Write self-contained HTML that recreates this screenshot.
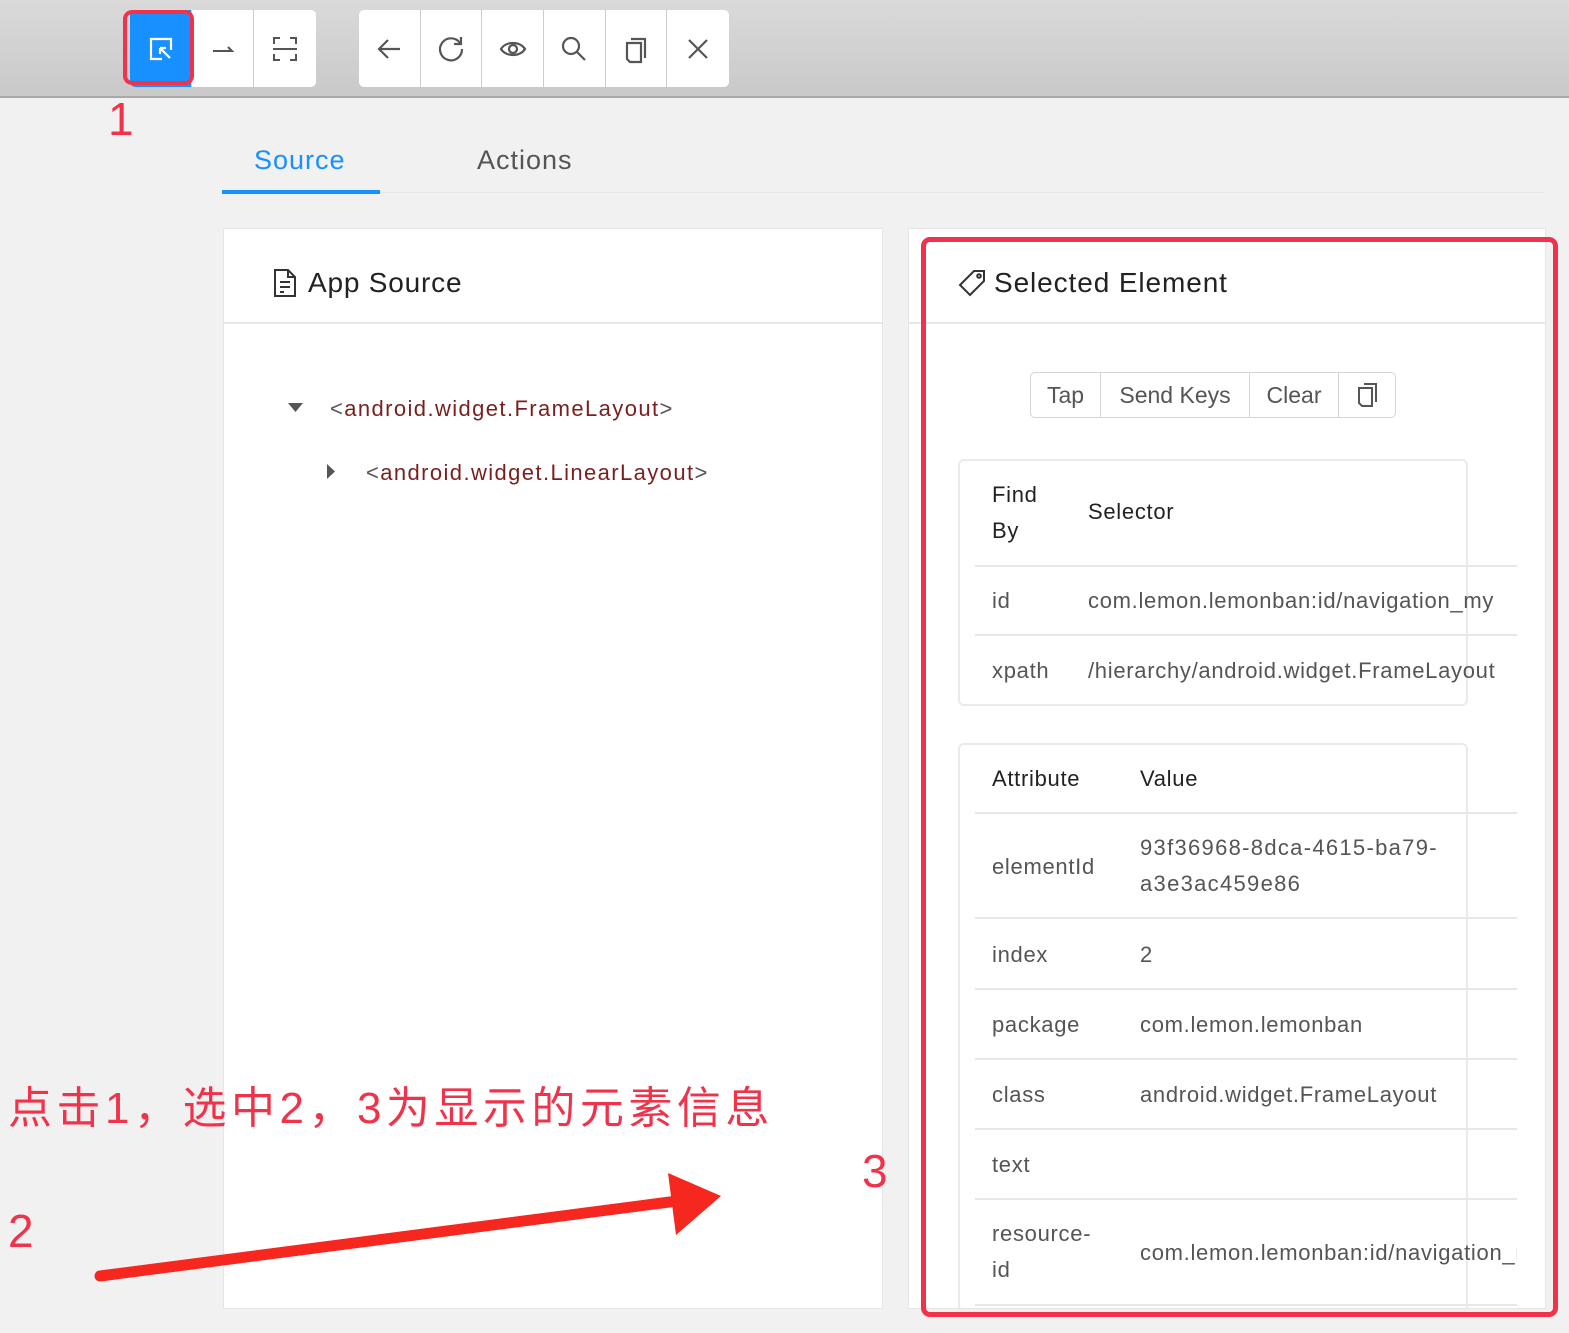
<!DOCTYPE html>
<html><head><meta charset="utf-8"><style>
*{box-sizing:border-box;margin:0;padding:0}
body{width:1569px;height:1333px;overflow:hidden;background:#f1f1f1;font-family:"Liberation Sans","Noto Sans CJK SC",sans-serif;position:relative;color:#333}
.a{position:absolute;white-space:nowrap}
.tb{position:absolute;left:0;top:0;width:1569px;height:98px;background:linear-gradient(#dadada,#c9c9c9);border-bottom:2px solid #a9a9a9}
.grp{position:absolute;top:10px;height:77px;background:#fff;border-radius:5px;display:flex;overflow:hidden}
.grp div{width:62px;height:77px;border-right:1px solid #ccc;display:flex;align-items:center;justify-content:center}
.grp div:last-child{border-right:none}
.card{position:absolute;background:#fff;border:1px solid #e6e6e6}
.hl{position:absolute;height:2px;background:#e8e8e8}
.t{font-size:22px;color:#555;letter-spacing:0.7px}
.th{font-size:22px;color:#222;letter-spacing:0.7px}
.src{font-size:22px;color:#7a1f1f;letter-spacing:1.4px}
</style></head><body>
<div class="tb"></div>
<div class="grp" style="left:130px;width:186px">
<div style="background:#1890ff"><svg width="30" height="30" viewBox="0 0 30 30" fill="none" stroke="#fff" stroke-width="2.2"><path d="M16 25H5V5h20v11"/><path d="M14 14l10 10M14 14v6M14 14h6"/></svg></div>
<div><svg width="26" height="26" viewBox="0 0 26 26" fill="none" stroke="#555" stroke-width="2"><path d="M3 15h19l-4-4"/></svg></div>
<div><svg width="30" height="30" viewBox="0 0 30 30" fill="none" stroke="#555" stroke-width="2"><path d="M4 10V4h6M20 4h6v6M26 20v6h-6M10 26H4v-6M3 15h24"/></svg></div>
</div>
<div class="grp" style="left:359px;width:370px">
<div><svg width="30" height="30" viewBox="0 0 30 30" fill="none" stroke="#555" stroke-width="2.2"><path d="M26 15H5M14 6l-9 9 9 9"/></svg></div>
<div><svg width="30" height="30" viewBox="0 0 30 30" fill="none" stroke="#555" stroke-width="2.2"><path d="M24 9A11 11 0 1 0 26 15"/><path d="M25 3v7h-7"/></svg></div>
<div><svg width="30" height="30" viewBox="0 0 30 30" fill="none" stroke="#555" stroke-width="2.2"><path d="M3 15c5-8 19-8 24 0c-5 8-19 8-24 0z"/><circle cx="15" cy="15" r="4"/></svg></div>
<div><svg width="30" height="30" viewBox="0 0 30 30" fill="none" stroke="#555" stroke-width="2.2"><circle cx="12" cy="12" r="8"/><path d="M18 18l8 8"/></svg></div>
<div><svg width="30" height="30" viewBox="0 0 30 30" fill="none" stroke="#555" stroke-width="2.2"><path d="M10 5h14v19"/><path d="M6 9h14v19H9l-3-3z"/></svg></div>
<div><svg width="30" height="30" viewBox="0 0 30 30" fill="none" stroke="#555" stroke-width="2.2"><path d="M6 6l18 18M24 6L6 24"/></svg></div>
</div>
<div class="a" style="left:123px;top:10px;width:71px;height:75px;border:4px solid #f0334a;border-radius:9px"></div>
<div class="a" style="left:108px;top:92px;font-size:46px;color:#f0334a">1</div>

<div class="hl" style="left:222px;top:192px;width:1323px;height:1px"></div>
<div class="a" style="left:222px;top:190px;width:158px;height:4px;background:#1890ff"></div>
<div class="a" style="left:254px;top:145px;font-size:27px;color:#1890ff;letter-spacing:1px">Source</div>
<div class="a" style="left:477px;top:145px;font-size:27px;color:#555;letter-spacing:1px">Actions</div>

<div class="card" style="left:223px;top:228px;width:660px;height:1081px"></div>
<div class="hl" style="left:224px;top:322px;width:658px"></div>
<svg class="a" style="left:272px;top:268px" width="26" height="30" viewBox="0 0 26 30" fill="none" stroke="#333" stroke-width="2"><path d="M3 2h13l7 7v19H3z M16 2v7h7 M8 14h10 M8 19h10 M8 24h4"/></svg>
<div class="a" style="left:308px;top:267px;font-size:28px;color:#222;letter-spacing:0.8px">App Source</div>
<svg class="a" style="left:288px;top:403px" width="16" height="10"><path d="M0 0h15L7.5 9z" fill="#555"/></svg>
<div class="a src" style="left:330px;top:396px"><span style="color:#555">&lt;</span>android.widget.FrameLayout<span style="color:#555">&gt;</span></div>
<svg class="a" style="left:327px;top:464px" width="10" height="16"><path d="M0 0v15l8-7.5z" fill="#555"/></svg>
<div class="a src" style="left:366px;top:460px"><span style="color:#555">&lt;</span>android.widget.LinearLayout<span style="color:#555">&gt;</span></div>

<div class="card" style="left:908px;top:228px;width:638px;height:1081px"></div>
<div class="hl" style="left:909px;top:322px;width:636px"></div>
<svg class="a" style="left:957px;top:268px" width="30" height="30" viewBox="0 0 30 30" fill="none" stroke="#333" stroke-width="2"><path d="M17 3h10v10L13 27 3 17z"/><circle cx="22" cy="8" r="1.8"/></svg>
<div class="a" style="left:994px;top:267px;font-size:28px;color:#222;letter-spacing:0.9px">Selected Element</div>

<div class="a" style="left:1030px;top:372px;width:366px;height:46px;border:1px solid #d5d5d5;border-radius:5px;display:flex;font-size:23px;color:#555">
<div style="width:70px;border-right:1px solid #d5d5d5;text-align:center;line-height:44px">Tap</div>
<div style="width:149px;border-right:1px solid #d5d5d5;text-align:center;line-height:44px">Send Keys</div>
<div style="width:89px;border-right:1px solid #d5d5d5;text-align:center;line-height:44px">Clear</div>
<div style="flex:1;display:flex;align-items:center;justify-content:center"><svg width="22" height="26" viewBox="0 0 22 26" fill="none" stroke="#555" stroke-width="2"><path d="M8 2h12v18"/><path d="M3 6h13v18H6l-3-3z"/></svg></div>
</div>

<div class="a" style="left:958px;top:459px;width:510px;height:247px;border:2px solid #eaeaea;border-radius:6px"></div>
<div class="a th" style="left:992px;top:477px;line-height:36px">Find<br>By</div>
<div class="a th" style="left:1088px;top:499px">Selector</div>
<div class="hl" style="left:975px;top:565px;width:542px"></div>
<div class="a t" style="left:992px;top:588px">id</div>
<div class="a t" style="left:1088px;top:588px;width:429px;overflow:hidden">com.lemon.lemonban:id/navigation_my</div>
<div class="hl" style="left:975px;top:634px;width:542px"></div>
<div class="a t" style="left:992px;top:658px">xpath</div>
<div class="a t" style="left:1088px;top:658px;width:429px;overflow:hidden">/hierarchy/android.widget.FrameLayout</div>

<div class="a" style="left:958px;top:743px;width:510px;height:570px;border:2px solid #eaeaea;border-radius:6px"></div>
<div class="a th" style="left:992px;top:766px">Attribute</div>
<div class="a th" style="left:1140px;top:766px">Value</div>
<div class="hl" style="left:975px;top:812px;width:542px"></div>
<div class="a t" style="left:992px;top:854px">elementId</div>
<div class="a t" style="left:1140px;top:830px;line-height:36px;letter-spacing:1.3px">93f36968-8dca-4615-ba79-<br>a3e3ac459e86</div>
<div class="hl" style="left:975px;top:917px;width:542px"></div>
<div class="a t" style="left:992px;top:942px">index</div>
<div class="a t" style="left:1140px;top:942px">2</div>
<div class="hl" style="left:975px;top:988px;width:542px"></div>
<div class="a t" style="left:992px;top:1012px">package</div>
<div class="a t" style="left:1140px;top:1012px">com.lemon.lemonban</div>
<div class="hl" style="left:975px;top:1058px;width:542px"></div>
<div class="a t" style="left:992px;top:1082px">class</div>
<div class="a t" style="left:1140px;top:1082px">android.widget.FrameLayout</div>
<div class="hl" style="left:975px;top:1128px;width:542px"></div>
<div class="a t" style="left:992px;top:1152px">text</div>
<div class="hl" style="left:975px;top:1198px;width:542px"></div>
<div class="a t" style="left:992px;top:1216px;line-height:36px">resource-<br>id</div>
<div class="a t" style="left:1140px;top:1240px;width:377px;overflow:hidden">com.lemon.lemonban:id/navigation_my</div>
<div class="hl" style="left:975px;top:1304px;width:542px"></div>

<div class="a" style="left:921px;top:237px;width:637px;height:1080px;border:5px solid #f0334a;border-radius:9px"></div>

<div class="a" style="left:8px;top:1072px;font-size:44px;color:#f0334a;letter-spacing:4.5px">点击1，选中2，3为显示的元素信息</div>
<div class="a" style="left:8px;top:1204px;font-size:46px;color:#f0334a">2</div>
<div class="a" style="left:862px;top:1144px;font-size:46px;color:#f0334a">3</div>
<svg class="a" style="left:0;top:0" width="1569" height="1333"><path d="M100 1276L685 1200" stroke="#f5271e" stroke-width="11" stroke-linecap="round"/><path d="M668 1173L721 1196L676 1235z" fill="#f5271e"/></svg>
</body></html>
